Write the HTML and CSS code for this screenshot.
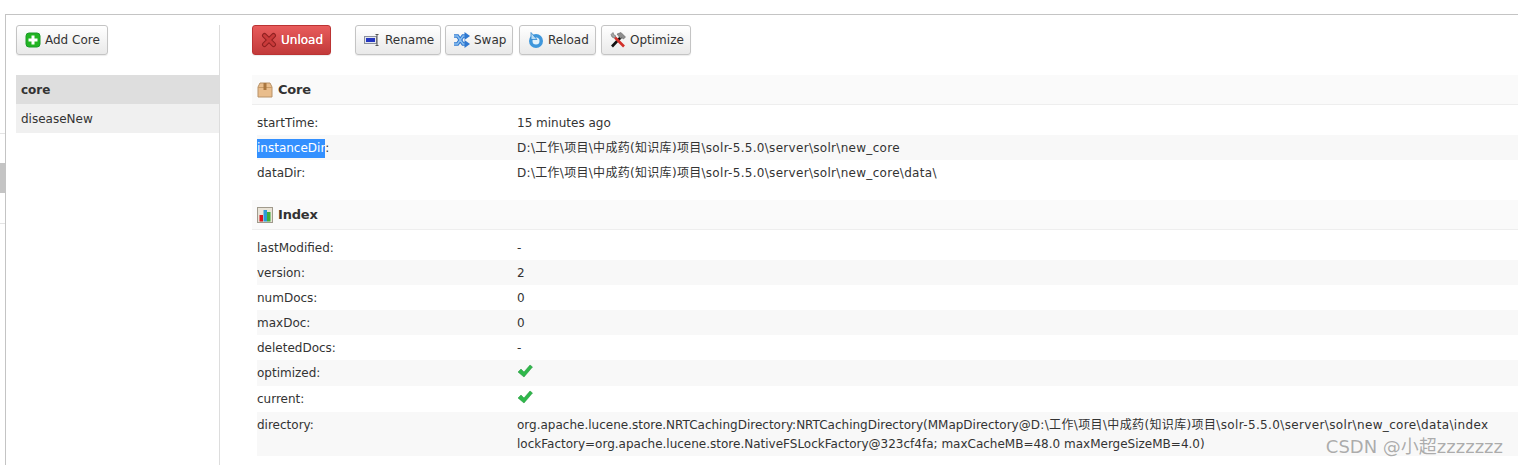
FILE: index.html
```html
<!DOCTYPE html>
<html lang="en">
<head>
<meta charset="utf-8">
<title>Core Admin</title>
<link rel="stylesheet" href="styles.css">
</head>
<body>
<div class="edge"><i class="edge-line"></i><i class="edge-block"></i><i class="edge-line2"></i></div>
<div class="frame">
  <aside class="side">
    <button class="btn add"><svg class="ic" viewBox="0 0 16 16"><rect x="1" y="1" width="14" height="14" rx="3" fill="#22b522" stroke="#1a9a2a"/><path d="M8 3.500v9M3.500 8h9" stroke="#fff" stroke-width="3"/></svg>Add Core</button>
    <ul class="cores">
      <li class="core on">core</li>
      <li class="core">diseaseNew</li>
    </ul>
  </aside>
  <main class="main">
    <div class="bar">
      <button class="btn red"><svg class="ic" viewBox="0 0 16 16"><path d="M3.500 3.500l9 9M12.500 3.500l-9 9" stroke="#8f2020" stroke-width="5" stroke-linecap="round"/><path d="M3.500 3.500l9 9M12.500 3.500l-9 9" stroke="#c93a3a" stroke-width="3" stroke-linecap="round"/></svg>Unload</button>
      <div class="tools">
        <button class="btn b-rename"><svg class="ic" viewBox="0 0 16 16"><rect x="0.500" y="4.500" width="12" height="7" fill="#e4e6ee" stroke="#8a8f9c"/><rect x="2" y="6" width="9" height="4" fill="#2436c0"/><path d="M13 2.500v11M11.500 2.500h3M11.500 13.500h3" stroke="#555" fill="none"/></svg>Rename</button>
        <button class="btn b-swap"><svg class="ic" viewBox="0 0 16 16"><path d="M0 4h3.500l5.500 8h2M0 12h3.500l5.500-8h2" stroke="#2f78d0" stroke-width="3.600" fill="none"/><path d="M0 4h3.500l5.500 8h2M0 12h3.500l5.500-8h2" stroke="#8cc0f0" stroke-width="1.400" fill="none"/><path d="M10.500 0l5.500 4-5.500 4zM10.500 8l5.500 4-5.500 4z" fill="#2f78d0"/></svg>Swap</button>
        <button class="btn b-reload"><svg class="ic" viewBox="0 0 16 16"><circle cx="8" cy="9" r="7" fill="#3f97dc"/><circle cx="8" cy="9" r="3.500" fill="#e4f2fb"/><path d="M3 0.500v7h6z" fill="#b9dcf4" stroke="#2f86cf" stroke-width=".8"/></svg>Reload</button>
        <button class="btn b-opt"><svg class="ic" viewBox="0 0 16 16"><path d="M2 14.500L11 5" stroke="#111" stroke-width="2.600"/><path d="M7 2l4-1.500 4.500 4.500-2 2-2-1.500-1 1z" fill="#8f8f8f" stroke="#555" stroke-width=".5"/><path d="M14 14.500L5 5.500" stroke="#d2302a" stroke-width="2.600"/><path d="M1 2.500L3 .5l1 2.500L6 4 4 6 2 5z" fill="#a5a5a5" stroke="#555" stroke-width=".5"/></svg>Optimize</button>
      </div>
    </div>

    <section class="block">
      <h2 class="head"><svg class="ic" viewBox="0 0 16 16"><path d="M1 5l2-4h10l2 4v10H1z" fill="#e9bd8c" stroke="#b89268"/><path d="M1 5.500h14" stroke="#c79a66"/><path d="M6.500 1h3v7h-3z" fill="#a9763f"/></svg>Core</h2>
      <dl class="rows">
        <div class="row"><dt>startTime:</dt><dd>15 minutes ago</dd></div>
        <div class="row alt"><dt><mark class="sel">instanceDir</mark>:</dt><dd class="path">D:\工作\项目\中成药(知识库)项目\solr-5.5.0\server\solr\new_core</dd></div>
        <div class="row"><dt>dataDir:</dt><dd class="path">D:\工作\项目\中成药(知识库)项目\solr-5.5.0\server\solr\new_core\data\</dd></div>
      </dl>
    </section>

    <section class="block">
      <h2 class="head"><svg class="ic" viewBox="0 0 16 16"><rect x="0.500" y="0.500" width="15" height="15" fill="#e9e4d8" stroke="#a09a8c"/><rect x="2.500" y="8" width="3.500" height="6.500" fill="#d8141c"/><rect x="6.500" y="3" width="3.500" height="11.500" fill="#2c9ad8"/><rect x="10" y="5" width="3.500" height="9.500" fill="#3cae3c"/></svg>Index</h2>
      <dl class="rows">
        <div class="row"><dt>lastModified:</dt><dd>-</dd></div>
        <div class="row alt"><dt>version:</dt><dd>2</dd></div>
        <div class="row"><dt>numDocs:</dt><dd>0</dd></div>
        <div class="row alt"><dt>maxDoc:</dt><dd>0</dd></div>
        <div class="row"><dt>deletedDocs:</dt><dd>-</dd></div>
        <div class="row alt tall"><dt>optimized:</dt><dd><svg class="check" viewBox="0 0 16 14"><path d="M1 8l3-3 3 3 6-7 2.500 2L7 13z" fill="#2fb84a" stroke="#1f8f38" stroke-width=".5"/></svg></dd></div>
        <div class="row tall"><dt>current:</dt><dd><svg class="check" viewBox="0 0 16 14"><path d="M1 8l3-3 3 3 6-7 2.500 2L7 13z" fill="#2fb84a" stroke="#1f8f38" stroke-width=".5"/></svg></dd></div>
        <div class="row alt dir"><dt>directory:</dt><dd>org.apache.lucene.store.NRTCachingDirectory:NRTCachingDirectory(MMapDirectory@<span class="path-long">D:\工作\项目\中成药(知识库)项目\solr-5.5.0\server\solr\new_core\data\index</span><br>lockFactory=org.apache.lucene.store.NativeFSLockFactory@323cf4fa; maxCacheMB=48.0 maxMergeSizeMB=4.0)</dd></div>
      </dl>
    </section>
  </main>
</div>
<div class="mark">CSDN @小超zzzzzzz</div>
</body>
</html>
```
FILE: styles.css
```css
* { box-sizing: border-box; }
html, body { margin: 0; height: 465px; overflow: hidden; background: #fff; }
body {
  position: relative;
  padding: 14px 0 0 5px;
  font-family: "DejaVu Sans", "Noto Sans CJK SC", sans-serif;
  font-size: 12px;
  color: #333;
}
.edge { position: absolute; left: 0; top: 0; width: 5px; height: 465px; }
.edge i { position: absolute; left: 0; width: 5px; display: block; }
.edge-line { top: 133px; height: 1px; background: #e4e4e4; }
.edge-block { top: 163px; height: 30px; background: #c4c4c4; }
.edge-line2 { top: 223px; height: 1px; background: #e4e4e4; }
.frame {
  display: flex;
  height: 451px;
  border-top: 1px solid #c4c4c4;
  border-left: 1px solid #c4c4c4;
  padding: 10px 0 0 10px;
}
.side {
  width: 204px;
  flex: none;
  border-right: 1px solid #ddd;
}
.btn {
  display: inline-flex;
  align-items: center;
  height: 30px;
  padding: 0 0 0 8px;
  border: 1px solid #c4c4c4;
  border-radius: 3px;
  background: linear-gradient(#fff, #e9e9e9);
  box-shadow: 0 1px 1px rgba(0,0,0,.08);
  font: inherit;
  color: #333;
  white-space: nowrap;
}
.ic { width: 16px; height: 16px; margin-right: 5px; flex: none; }
.add { width: 92px; }
.add .ic { margin-right: 4px; }
.cores { list-style: none; margin: 20px 0 0; padding: 0; }
.core { height: 29px; line-height: 31px; padding-left: 5px; background: #f0f0f0; }
.core.on { background: #dedede; font-weight: bold; }
.main { flex: 1; min-width: 0; padding-left: 32px; }
.bar { display: flex; height: 50px; }
.red {
  width: 79px;
  background: linear-gradient(#e85c5c, #c23a3a);
  border-color: #b33;
  color: #fff;
  text-shadow: 0 0 .4px #fff;
}
.red .ic { margin-right: 4px; }
.tools { display: flex; margin-left: 24px; }
.b-rename { width: 86px; }
.b-swap { width: 68px; margin-left: 4px; }
.b-reload { width: 77px; margin-left: 6px; }
.b-opt { width: 90px; margin-left: 5px; }
.b-swap .ic, .b-reload .ic, .b-opt .ic { margin-right: 4px; }
.block { margin-bottom: 15px; }
.head {
  display: flex;
  align-items: center;
  height: 30px;
  margin: 0;
  padding-left: 5px;
  background: #fafafa;
  border-bottom: 1px solid #eee;
  font-size: 13px;
  font-weight: bold;
  letter-spacing: -.2px;
}
.rows { margin: 5px 0 0 5px; }
.row { display: flex; height: 25px; line-height: 27px; }
.row.tall { height: 26px; }
.row.dir { height: 44px; line-height: 19px; padding-top: 4px; }
.alt { background: #f8f8f8; }
dt { width: 260px; flex: none; }
dd { margin: 0; white-space: nowrap; }
.path { letter-spacing: .3px; }
.path-long { letter-spacing: .36px; }
.sel { display: inline-block; height: 19px; line-height: 19px; background: #3390ff; color: #fff; }
.check { width: 16px; height: 14px; display: block; margin-top: 4px; }
.mark {
  position: absolute;
  right: 15px;
  top: 437px;
  line-height: 20px;
  font-size: 18px;
  color: rgba(120,120,120,.6);
}
```
